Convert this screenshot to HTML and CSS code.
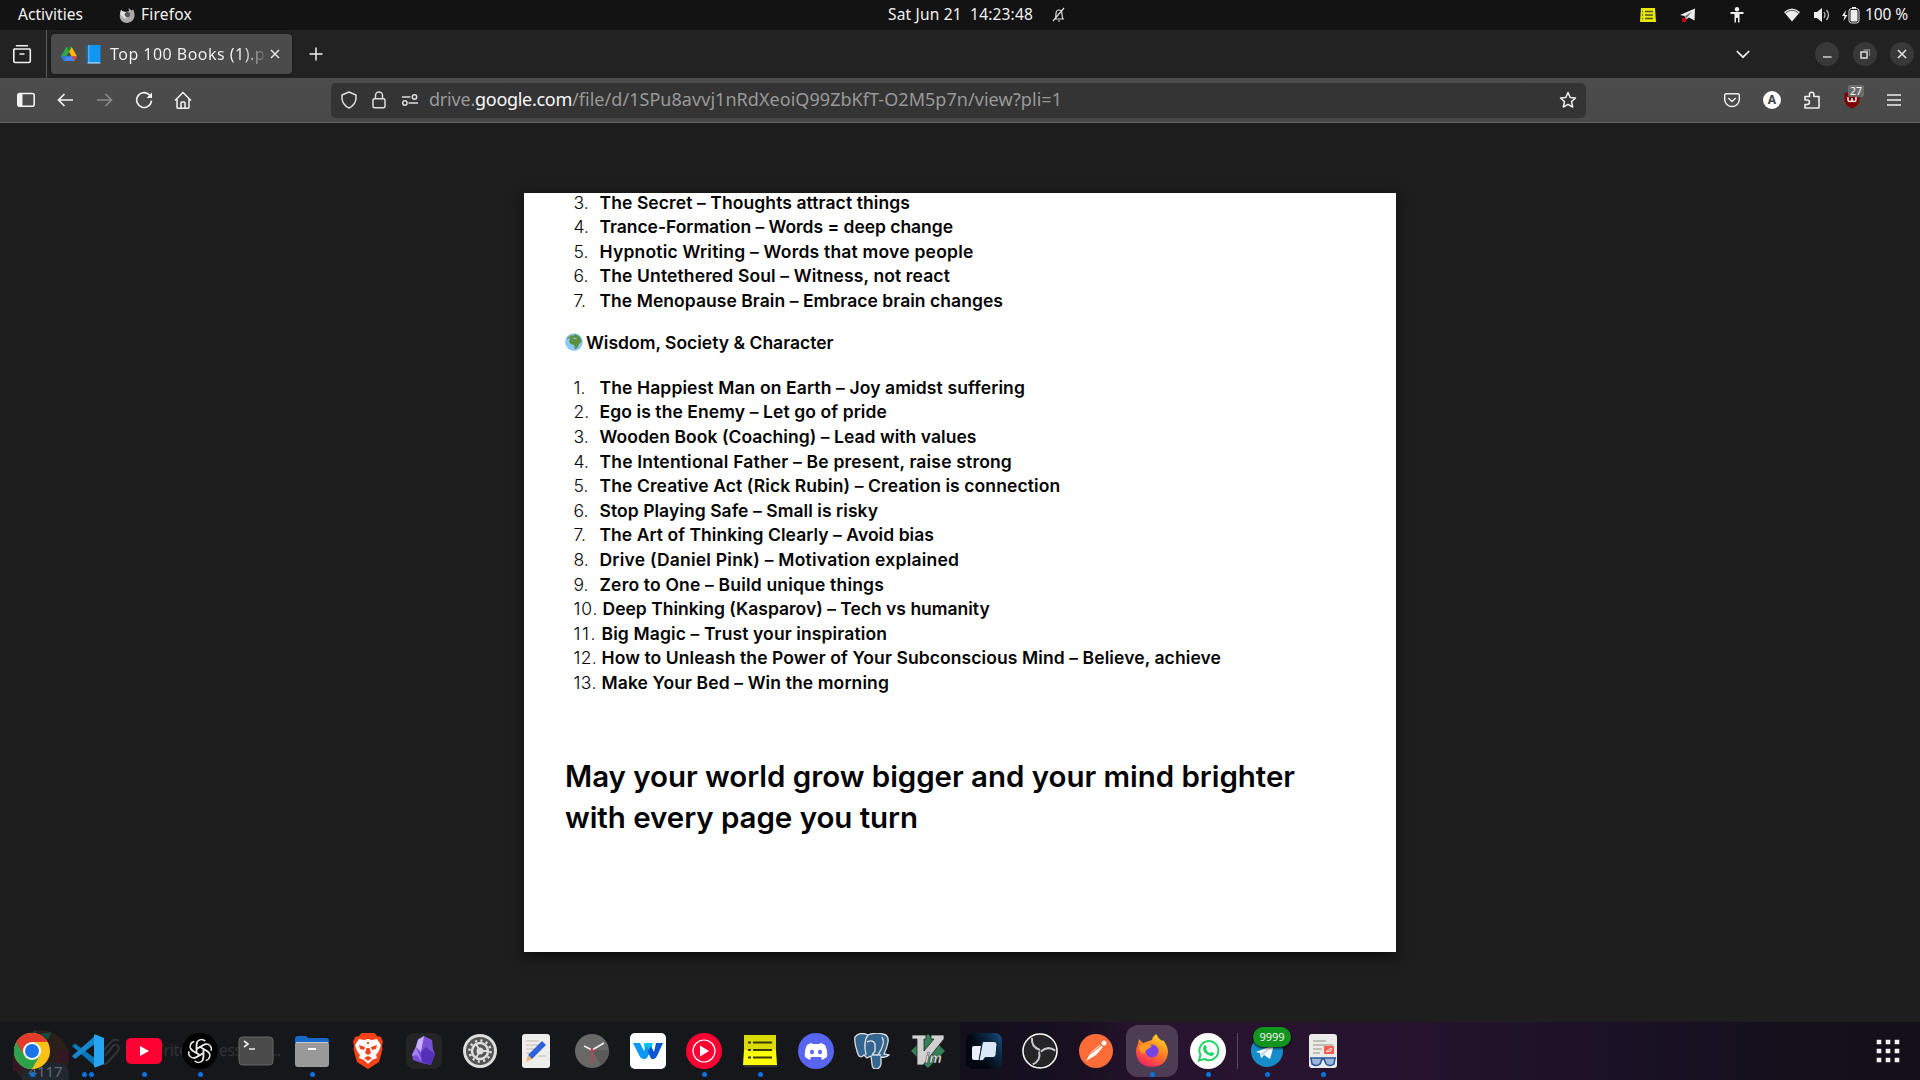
FILE: index.html
```html
<!DOCTYPE html>
<html lang="en">
<head>
<meta charset="utf-8">
<title>Top 100 Books (1).pdf</title>
<link rel="stylesheet" href="styles.css">
</head>
<body>
<header class="topbar">
  <div class="top-left">
    <span class="activities" data-fit="65">Activities</span>
    <svg class="ff-mini" width="16" height="16" viewBox="0 0 16 16"><path d="M1 7 2 3l2 1.500 3 .5 3-1-.5-3 3 2.500 1.500-1c3 5 2 13-6 13.500C2 15.500 0 11 1 7z" fill="#aaa"/><path d="M1 7 2 3l2 1.500 3 .5-2 3 4 1-3 3z" fill="#dedede"/><circle cx="8.500" cy="7.500" r="2.600" fill="#555"/></svg>
    <span data-fit="51">Firefox</span>
  </div>
  <div class="top-center">
    <span data-fit="145">Sat Jun 21&nbsp; 14:23:48</span>
    <svg width="16" height="16" viewBox="0 0 16 16" fill="none" stroke="#ddd" stroke-width="1.200"><path d="M3 12h10M4 12c1-2 1-3 1-5 0-3 1-4 3-4s3 1 3 4c0 2 0 3 1 5M2 14 13 1M7 14h2"/></svg>
  </div>
  <div class="top-right">
    <svg class="note-mini" width="16" height="15" viewBox="0 0 16 15"><path d="M1 0h14l1 14H0z" fill="#e9e900"/><path d="M2 3.500h1m2 0h8M2 7h1m2 0h8M2 10.500h1m2 0h8" stroke="#555518" stroke-width="1.300"/></svg>
    <svg class="tg-mini" width="17" height="16" viewBox="0 0 17 16"><path d="M0 8 15 1.500l-.5 12L9 10.500l-3 2L4.500 9z" fill="#eee"/><path d="m5 9 7-4.500L7.500 10 6 12z" fill="#777"/><circle cx="4" cy="13" r="2.200" fill="#d00000"/></svg>
    <svg class="access" width="14" height="16" viewBox="0 0 14 16"><circle cx="7" cy="2.300" r="2.200" fill="#eee"/><path d="M.5 5h13v2H9.500v8.500h-1.500V11H6v4.500H4.500V7H.5z" fill="#eee"/></svg>
    <svg class="wifi" width="16" height="14" viewBox="0 0 16 14"><path d="M0 4Q8-3 16 4L8 13.500z" fill="#eee"/><path d="M1.500 5Q8-.5 14.500 5" fill="none" stroke="#555"/></svg>
    <svg class="vol" width="16" height="14" viewBox="0 0 16 14"><path d="M0 4h3l5-4v14l-5-4H0z" fill="#eee"/><path d="M10 4q2 3 0 6M12.500 2q4 5 0 10" fill="none" stroke="#bbb" stroke-width="1.300"/></svg>
    <svg class="bat" width="18" height="17" viewBox="0 0 18 17"><path d="M4 3 0 9h2.500L1.500 14 5.500 8H3z" fill="#eee"/><rect x="8.500" y="3" width="7" height="11.500" rx="1" fill="#eee"/><rect x="7" y="1.500" width="10" height="14.500" rx="2.500" fill="none" stroke="#ddd"/><path d="M10 .5h4" stroke="#eee"/></svg>
    <span class="pct" data-fit="43">100 %</span>
  </div>
</header>

<nav class="tabstrip">
  <div class="recent"><svg width="20" height="20" viewBox="0 0 20 20" fill="none" stroke="#f0f0f0" stroke-width="1.600"><path d="M4.500 1.800h11M2.500 5h15" stroke-linecap="round"/><path d="M2.500 5Q1.800 5 1.800 6v11q0 1.500 1.500 1.500h13.500q1.500 0 1.500-1.500V6q0-1-.8-1M7.500 10h5"/></svg></div>
  <div class="tab">
    <svg width="16" height="16" viewBox="0 0 16 16"><path d="M5.300 1h5.400L8 5.800 2.700 15 0 10.300z" fill="#2fa84f"/><path d="M5.300 1h5.400L16 10.300h-5.400z" fill="#ffba00"/><path d="M5.300 1h5.400L8 5.700z" fill="#188038"/><path d="M5.400 10.300H16L13.300 15H2.700z" fill="#4285f4"/><path d="m0 10.300h5.400L2.700 15z" fill="#2874e8"/><path d="M10.700 10.300H16L13.300 15z" fill="#e94335"/></svg>
    <svg class="book" width="15" height="19" viewBox="0 0 15 19"><path d="M0 1 2 0v18L0 17z" fill="#226699"/><path d="M2 17h12v1.500H2z" fill="#ccd6dd"/><path d="M2 0h12.500v17H2z" fill="#0d96f2"/><path d="M2 0h1.500v17H2zM1 17.500h13.500v1H1z" fill="#55acee"/></svg>
    <span class="tab-title" data-fit="155">Top 100 Books (1).p</span>
    <svg class="tab-x" width="10" height="10" viewBox="0 0 10 10"><path d="m1 1 8 8M9 1 1 9" stroke="#eee" stroke-width="1.400"/></svg>
  </div>
  <svg class="newtab" width="14" height="14" viewBox="0 0 14 14"><path d="M7 .5v13M.5 7h13" stroke="#f0f0f0" stroke-width="1.500"/></svg>
  <svg class="chev" width="14" height="9" viewBox="0 0 14 9"><path d="m.8 1 6.200 6.200L13.200 1" fill="none" stroke="#eee" stroke-width="1.700"/></svg>
  <div class="winbtns">
    <span class="wb"><svg width="10" height="10"><path d="M1 8h8.500" stroke="#aaa" stroke-width="2"/></svg></span>
    <span class="wb"><svg width="10" height="10"><path d="M3.500 1h6v6" fill="none" stroke="#888" stroke-width="1.300"/><rect x="1" y="3" width="6" height="6" fill="none" stroke="#ddd" stroke-width="1.500"/></svg></span>
    <span class="wb"><svg width="10" height="10"><path d="m1 1 8 8M9 1 1 9" stroke="#ddd" stroke-width="1.700"/></svg></span>
  </div>
</nav>

<div class="toolbar">
  <div class="nav-icons">
    <svg width="18" height="18" viewBox="0 0 18 18"><rect x=".8" y="2.500" width="16.400" height="12.800" rx="2" fill="none" stroke="#f3f3f3" stroke-width="1.600"/><path d="M1 3h4.500v12H1z" fill="#f3f3f3"/></svg>
    <svg width="18" height="18" viewBox="0 0 18 18" fill="none" stroke="#f3f3f3" stroke-width="1.700"><path d="M17 9H2.500m6-6-6 6 6 6"/></svg>
    <svg width="18" height="18" viewBox="0 0 18 18" fill="none" stroke="#8b8b8b" stroke-width="1.600"><path d="M1 9h14.500m-6-6 6 6-6 6"/></svg>
    <svg width="18" height="18" viewBox="0 0 18 18" fill="none" stroke="#f3f3f3" stroke-width="1.600"><path d="M16.500 9.500A7.400 7.400 0 1 1 14 3.500l1.500 1.500"/><path d="M17 1.500V7h-5.500z" fill="#f3f3f3" stroke="none"/></svg>
    <svg width="18" height="18" viewBox="0 0 18 18" fill="none" stroke="#f3f3f3" stroke-width="1.500"><path d="m1 9.500 8-8 8 8M3 8v8.500q0 .7.700.7h10.600q.7 0 .7-.7V8M7 17v-5q0-1 1-1h2q1 0 1 1v5"/></svg>
  </div>
  <div class="urlbar">
    <svg class="shield" width="16" height="18" viewBox="0 0 16 18" fill="none" stroke="#ddd" stroke-width="1.500"><path d="M8 1 15 4v3c0 5-3 8-7 10C4 15 1 12 1 7V4z" stroke-linejoin="round"/></svg>
    <svg class="lock" width="14" height="18" viewBox="0 0 14 18" fill="none" stroke="#ddd" stroke-width="1.500"><rect x="1" y="7.800" width="12" height="9" rx="1.500"/><path d="M3.500 8V4.500a3.500 3.500 0 0 1 7 0V8"/></svg>
    <svg class="perm" width="16" height="12" viewBox="0 0 16 12" fill="none" stroke="#ddd" stroke-width="1.500"><path d="M0 3h8.500M6.500 9H16"/><circle cx="12.500" cy="3" r="2.200"/><circle cx="2.900" cy="9" r="2.200"/></svg>
    <div class="url"><span data-fit="46">drive.</span><span class="host" data-fit="97">google.com</span><span data-fit="490">/file/d/1SPu8avvj1nRdXeoiQ99ZbKfT-O2M5p7n/view?pli=1</span></div>
    <svg class="star" width="18" height="18" viewBox="0 0 18 18" fill="none" stroke="#eee" stroke-width="1.500"><path d="m9 1.500 2.200 5 5.300.5-4 3.600 1.200 5.400L9 13.300 4.300 16l1.200-5.400-4-3.600 5.300-.5z" stroke-linejoin="round"/></svg>
  </div>
  <div class="ext-icons">
    <svg width="18" height="18" viewBox="0 0 18 18" fill="none" stroke="#eee" stroke-width="1.500"><path d="M3.500 2.800h11q1.800 0 1.800 1.800V8.500a7.300 7 0 0 1-14.600 0V4.600q0-1.800 1.800-1.800zM5.300 7 9 10.500 12.700 7"/></svg>
    <span class="acct">A</span>
    <svg width="18" height="18" viewBox="0 0 18 18" fill="none" stroke="#eee" stroke-width="1.600"><path d="M2 8V5.500h4.500V3.500a2.200 2.200 0 0 1 4.400 0V5.500H16V17H2v-3.500h2.200a2.200 2.200 0 0 0 0-4.500H2z" stroke-linejoin="round"/></svg>
    <span class="ublock"><svg width="18" height="18" viewBox="0 0 18 18"><path d="M1.500 2Q6 2 9 0q3 2 7.500 2v7q0 5-7.500 8.500Q1.500 14 1.500 9z" fill="#7e0000"/><path d="M5 6v2.500q0 2 2 2t2-2V7v1.500q0 2 2 2t2-2V6" fill="none" stroke="#eee" stroke-width="1.500"/></svg><b>27</b></span>
    <svg class="menu" width="18" height="18" viewBox="0 0 18 18"><path d="M2 4h14M2 9h14M2 14h14" stroke="#eee" stroke-width="1.500"/></svg>
  </div>
</div>

<main class="viewer">
  <article class="paper">
    <ol class="books">
      <li><i>3.</i><b data-fit="310.500">The Secret – Thoughts attract things</b></li>
      <li><i>4.</i><b data-fit="353.500">Trance-Formation – Words = deep change</b></li>
      <li><i>5.</i><b data-fit="374">Hypnotic Writing – Words that move people</b></li>
      <li><i>6.</i><b data-fit="350.500">The Untethered Soul – Witness, not react</b></li>
      <li><i>7.</i><b data-fit="403.500">The Menopause Brain – Embrace brain changes</b></li>
    </ol>
    <h2 class="section"><svg width="18" height="18" viewBox="0 0 18 18"><circle cx="9" cy="9" r="8.800" fill="#88c9f9"/><path d="m4 4 2-2 2 1 2-2 4 2 2 3 .5 3-2.500 2-1 3-3 2.500-1-4.500-3-1-2-2 1-3zM1.500 6 4 3l-.5 3z" fill="#5c913b"/><path d="m7 4.500 4 .5 1 1.500-3-.8z" fill="#88c9f9"/></svg><span data-fit="247.500">Wisdom, Society &amp; Character</span></h2>
    <ol class="books">
      <li><i>1.</i><b data-fit="425.500">The Happiest Man on Earth – Joy amidst suffering</b></li>
      <li><i>2.</i><b data-fit="287.500">Ego is the Enemy – Let go of pride</b></li>
      <li><i>3.</i><b data-fit="377">Wooden Book (Coaching) – Lead with values</b></li>
      <li><i>4.</i><b data-fit="412.500">The Intentional Father – Be present, raise strong</b></li>
      <li><i>5.</i><b data-fit="460.500">The Creative Act (Rick Rubin) – Creation is connection</b></li>
      <li><i>6.</i><b data-fit="278.500">Stop Playing Safe – Small is risky</b></li>
      <li><i>7.</i><b data-fit="334.500">The Art of Thinking Clearly – Avoid bias</b></li>
      <li><i>8.</i><b data-fit="359.500">Drive (Daniel Pink) – Motivation explained</b></li>
      <li><i>9.</i><b data-fit="284.500">Zero to One – Build unique things</b></li>
      <li class="ten"><i data-fit="25">10.</i><b data-fit="387">Deep Thinking (Kasparov) – Tech vs humanity</b></li>
      <li class="two"><i data-fit="23.500">11.</i><b data-fit="285.500">Big Magic – Trust your inspiration</b></li>
      <li class="two"><i data-fit="23.500">12.</i><b data-fit="619.500">How to Unleash the Power of Your Subconscious Mind – Believe, achieve</b></li>
      <li class="two"><i data-fit="23.500">13.</i><b data-fit="287.500">Make Your Bed – Win the morning</b></li>
    </ol>
    <p class="closing"><span data-fit="730">May your world grow bigger and your mind brighter</span><br><span data-fit="353">with every page you turn</span></p>
  </article>
</main>

<footer class="dock">
  <div class="ghost">
    <svg class="ghost-avatar" width="56" height="50" viewBox="0 0 56 50"><circle cx="28" cy="28" r="28" fill="#2a2019"/><path d="m12 6 12-6-4 6zM26 4l12-2-3 8z" fill="#17493e"/><path d="M45 20h11v12H45zM0 31h12v10H0z" fill="#351624"/></svg>
    <span class="ghost-count">4117</span>
    <svg class="ghost-clip" width="24" height="28" viewBox="0 0 24 28" fill="none" stroke="#303236" stroke-width="2.200"><path d="m7 18 8-10q3-3 5 0t-1 6L9 25q-5 3-7-2t2-9L13 4q4-4 8-1"/></svg>
    <span class="ghost-text" data-fit="132">Write a message...</span>
  </div>
  <div class="app d1"><svg viewBox="0 0 36 36"><circle cx="18" cy="18" r="18" fill="#fbc116"/><path d="M18 18 2.400 9A18 18 0 0 0 18 36l7.800-13.500z" fill="#2da04c"/><path d="M2.400 9A18 18 0 0 1 33.600 9H18l-7.800 13.500z" fill="#e33b2e"/><circle cx="18" cy="18" r="9" fill="#fff"/><circle cx="18" cy="18" r="7" fill="#1a73e8"/></svg></div>
  <div class="app d2"><svg viewBox="0 0 36 36"><path d="M2 13 5 10.500 26 26v8z" fill="#0877b9"/><path d="M2 23 5 26 26 10V2z" fill="#1687ce"/><path d="m24 2 1.500-.5L34 5v26l-8.500 3.500L24 34z" fill="#27a5f1"/></svg></div>
  <div class="app d1"><svg viewBox="0 0 36 36"><rect y="5" width="36" height="26" rx="5" fill="#ff0033"/><path d="m14 13 9 5-9 5z" fill="#fff"/></svg></div>
  <div class="app d1"><svg viewBox="0 0 36 36"><circle cx="18" cy="18" r="18"/><g fill="none" stroke="#e8e8e8" stroke-width="1.500"><g id="knot"><path d="M14.500 20V11.500a5 5 0 0 1 8.800-3.200M14.500 16l7-4a5 5 0 0 1 3-.6"/></g><use href="#knot" transform="rotate(60 18 18)"/><use href="#knot" transform="rotate(120 18 18)"/><use href="#knot" transform="rotate(180 18 18)"/><use href="#knot" transform="rotate(240 18 18)"/><use href="#knot" transform="rotate(300 18 18)"/></g></svg></div>
  <div class="app"><svg viewBox="0 0 36 36"><rect x="1" y="4" width="34" height="28" rx="3.500" fill="#4b4b4b" stroke="#666"/><path d="m6 8 4 3-4 3M11 16h6" fill="none" stroke="#eee" stroke-width="1.600"/></svg></div>
  <div class="app d1"><svg viewBox="0 0 36 36"><path d="M1 14V6q0-3 3-3h8l2 2h18q3 0 3 3v6z" fill="#1668ca"/><rect x="1" y="9" width="34" height="25" rx="3" fill="#999"/><path d="M2 9.500h32" stroke="#ccc"/><path d="M14 16h8" stroke="#fff" stroke-width="2"/></svg></div>
  <div class="app"><svg viewBox="0 0 36 36"><path d="M11.500 0h13l3 3.500h3l2.500 5-1 4 .5 4L29 29l-11 7-11-7-3.500-12.500.5-4-1-4 2.500-5h3z" fill="#fa4218"/><path d="m9 6 5 1 4-1 4 1 5-1 4 6-2 6-3 4 1 3-5 2-4 4-4-4-5-2 1-3-3-4-2-6z" fill="#fff"/><path d="m9 12 6 2-1 3-4-1zm18 0-6 2 1 3 4-1zM16.500 9h3L18 12zM16.500 15h3l1.500 5-3 2-3-2zM14 25l4-2 4 2-4 3z" fill="#fa4218"/></svg></div>
  <div class="app"><svg viewBox="0 0 36 36"><rect width="36" height="36" rx="8" fill="#242424"/><path d="m18 3 8 4 1 9 2 5-4 11-9-2-9-3-1-6 4-8 2-7z" fill="#7850d6"/><path d="m18 3-6 4-2 7 5 5z" fill="#c9b2ff"/><path d="m10 14-4 9 5-1 5 7z" fill="#a583f1"/><path d="m15 19 5-5 9 7-4 11-9-3z" fill="#5430b7"/></svg></div>
  <div class="app"><svg viewBox="0 0 36 36"><circle cx="18" cy="18" r="17" fill="#dededc"/><circle cx="18" cy="18" r="14" fill="#555"/><circle cx="18" cy="18" r="10.500" fill="none" stroke="#ddd" stroke-width="2.500" stroke-dasharray="2.200 3.300"/><circle cx="18" cy="18" r="8" fill="none" stroke="#ddd" stroke-width="2.500"/><circle cx="18" cy="18" r="3.500" fill="#ddd"/><path d="m18 18 8 0M18 18l-4-7M18 18l-4 7" stroke="#ddd" stroke-width="1.800"/></svg></div>
  <div class="app"><svg viewBox="0 0 36 36"><rect x="4" y="1" width="28" height="34" rx="3" fill="#ededeb"/><path d="M8 8h13M8 12h13M8 16h9M8 20h7M20 23h8" stroke="#bdb9ac"/><path d="m10 22 14-14 4 4-14 14z" fill="#2e62d8"/><path d="m10 22 4 4-6 3z" fill="#f4b46b"/></svg></div>
  <div class="app"><svg viewBox="0 0 36 36"><circle cx="18" cy="18" r="17" fill="#686868"/><path d="M18 17 35 17a17 17 0 0 1-8 15z" fill="#5a5a5a"/><path d="m10 13 8 4 12-7" fill="none" stroke="#eee" stroke-width="1.600"/><path d="M18 15v15" stroke="#e3324b" stroke-width="1.200"/><circle cx="18" cy="17" r="1.500" fill="#e3324b"/></svg></div>
  <div class="app"><svg viewBox="0 0 36 36"><rect width="36" height="36" rx="5" fill="#fff"/><path d="M14 10h9l-3 9-5 1z" fill="#00c2ff"/><path d="M3 10h7l4 8 3-5 3 6-3 6q-3 2-6 0-1-1-2-3z" fill="#0a98f5"/><path d="m33 10-6 13q-2 4-5 3-2-1-4-8l3-5 3 6 2-9z" fill="#0755cf"/></svg></div>
  <div class="app d1"><svg viewBox="0 0 36 36"><circle cx="18" cy="18" r="18" fill="#ff0033"/><circle cx="18" cy="18" r="11" fill="none" stroke="#fff" stroke-width="1.200"/><path d="m14 12.500 9 5.500-9 5.500z" fill="#fff"/></svg></div>
  <div class="app d1"><svg viewBox="0 0 36 36"><path d="M2 2h32v15H2z" fill="#dbdb00"/><path d="M2 17h32l1 15H1z" fill="#ff0"/><path d="M1 32h34v2H2z" fill="#333"/><path d="M6 9.500h3m2 0h19M6 17h3m2 0h19M6 24.500h3m2 0h19" stroke="#38380b" stroke-width="2"/></svg></div>
  <div class="app"><svg viewBox="0 0 36 36"><circle cx="18" cy="18" r="18" fill="#5865f2"/><path d="m13 10 2 1h6l2-1 4 2q3 6 2 12l-5 3-1-3H13l-1 3-5-3q-1-6 2-12z" fill="#fff"/><ellipse cx="14" cy="19" rx="2" ry="2.300" fill="#5865f2"/><ellipse cx="22" cy="19" rx="2" ry="2.300" fill="#5865f2"/></svg></div>
  <div class="app"><svg viewBox="0 0 36 36"><path d="M3 2q5-3 11 0 7-3 15-1 6 1 5 8-1 6-4 12l5 1q-3 3-8 2v7q-1 5-5 5t-4-5l-1-8-4 2-3-3q-5 5-7-4-3-9-2-14z" fill="#336791" stroke="#ddd" stroke-width="1.300"/><path d="M12 22q-3-14 2-20M13 9q6-3 8 2v7l-3 4M24 22q8-12 4-18M18 22h9" fill="none" stroke="#ddd" stroke-width="1.400"/></svg></div>
  <div class="app"><svg viewBox="0 0 36 36"><path d="M18 1 35 18 18 35 1 18z" fill="#358057"/><path d="M2 2h14v4h-2v12L24 6h-3V2h13v4L13 32H7V6H2z" fill="#d0d0d0" stroke="#222" stroke-width=".8"/><text x="15" y="30" class="vim">im</text></svg></div>
  <div class="app"><svg viewBox="0 0 36 36"><defs><linearGradient id="bg" x2="1" y2="-.6"><stop stop-color="#03070f"/><stop offset=".4" stop-color="#0c2744"/><stop offset="1" stop-color="#1775b5"/></linearGradient></defs><rect width="36" height="36" rx="7" fill="url(#bg)"/><path d="M8 13h7l-2 14H8q-2 0-2-2V15q0-2 2-2z" fill="#eaf0fb"/><path d="M18 8.500h10q3 0 3 3l-1 10q0 3-3 3h-8l-2 3h-4l3-16q0-3 2-3z" fill="#dce7fa" stroke="#102337"/></svg></div>
  <div class="app"><svg viewBox="0 0 36 36"><circle cx="18" cy="18" r="17" fill="#252427" stroke="#fff" stroke-width="1.500"/><g fill="none" stroke="#c8c8cb" stroke-width="2"><path id="blade" d="M18 17Q9 14 10 5"/><use href="#blade" transform="rotate(120 18 18)"/><use href="#blade" transform="rotate(240 18 18)"/></g></svg></div>
  <div class="app"><svg viewBox="0 0 36 36"><circle cx="18" cy="18" r="17" fill="#ff6c37"/><path d="m8 28 5-9 9-7 3 2-7 8z" fill="#fff"/><circle cx="26" cy="10" r="2.500" fill="#fff"/><path d="M12 21 23 13" stroke="#ff6c37"/></svg></div>
  <div class="app d1 active"><svg viewBox="0 0 36 36"><defs><linearGradient id="fx" x1=".8" y1="0" x2=".3" y2="1"><stop stop-color="#ffe226"/><stop offset=".5" stop-color="#ff7b22"/><stop offset="1" stop-color="#f42166"/></linearGradient></defs><path d="M22 1q2 4 6 7l1-1q5 6 5 12-1 14-16 15Q3 33 2 19q0-5 2-8l1-5 4 4 3-1 6-2q1-4 4-6z" fill="url(#fx)"/><circle cx="18" cy="18" r="6.500" fill="#7542e5"/><path d="M5 13q7-4 13 0l-3 2.500q-4 1-4 5Q4 20 5 13z" fill="#ff9b25"/></svg></div>
  <div class="app d1"><svg viewBox="0 0 36 36"><circle cx="18" cy="18" r="18" fill="#fff"/><path d="M9 27.500 10.500 22a9.500 9.500 0 1 1 4 4z" fill="none" stroke="#25d366" stroke-width="2"/><path d="M14 12.500q1-1 2 0l1 2.500-1 1q1 3 4 4l1-1 3 1q0 3-3 3-8-2-8-8z" fill="#25d366"/></svg></div>
  <span class="sep"></span>
  <div class="app d1"><svg viewBox="0 0 36 36"><circle cx="18" cy="18" r="16" fill="#168dc8"/><path d="m7 19 18-7-4 14-6-4-3 3-1-5z" fill="#fff"/><path d="m12 20 10-6-7 8-2 3z" fill="#c8dce9"/></svg><span class="badge">9999</span></div>
  <div class="app d1"><svg viewBox="0 0 36 36"><rect x="4" y="1" width="28" height="34" rx="3" fill="#ebebe9"/><path d="M8 8h13M8 12h20M8 16h9M8 20h7" stroke="#b4afa0" stroke-width="1.300"/><path d="M19 13h10v8H19z" fill="#ff5b50"/><path d="m21 19 5-4q2 4-4 3" fill="none" stroke="#fff"/><path d="M5 25h26M6 25l1 6q5 3 8 0l2-5h2l2 5q4 3 8 0l1-6" fill="#9db6d8" stroke="#24579a" stroke-width="1.500"/></svg></div>
  <svg class="grid" width="24" height="24" viewBox="0 0 24 24" fill="#f2f2f0"><path d="M.7.7h4.600v4.600H.7zM9.700.7h4.600v4.600H9.700zM18.700.7h4.600v4.600h-4.600zM.7 9.700h4.600v4.600H.7zM9.700 9.700h4.600v4.600H9.700zM18.700 9.700h4.600v4.600h-4.600zM.7 18.700h4.600v4.600H.7zM9.700 18.700h4.600v4.600H9.700zM18.700 18.700h4.600v4.600h-4.600z"/></svg>
</footer>
<script src="fit.js"></script>
</body>
</html>
```
FILE: styles.css
```css
* { box-sizing: border-box; }
body { margin: 0; width: 1920px; height: 1080px; overflow: hidden; display: flex; flex-direction: column; background: #1e1e1e; color: #f2f2f2; font: 16px/20px "Noto Sans", "Open Sans", sans-serif; }
svg { display: block; flex: none; }
[data-fit] { white-space: nowrap; }

.topbar { height: 30px; background: #131313; display: grid; grid-template-columns: 888px 1fr 280px; align-items: center; font-size: 15.500px; }
.top-left, .top-center, .top-right { display: flex; align-items: center; height: 30px; }
.topbar span { margin-top: -2px; }
.top-left { padding-left: 18px; }
.activities { margin-right: 36px; }
.ff-mini { margin-right: 6px; }
.top-center svg { margin-left: 18px; }
.tg-mini { margin-left: 24px; }
.access { margin-left: 33px; }
.wifi { margin-left: 40px; }
.vol { margin-left: 14px; }
.bat { margin-left: 12px; }
.pct { margin-left: 5px; }

.tabstrip { height: 48px; background: #222; display: flex; align-items: center; }
.recent { width: 47px; height: 48px; padding: 14px 0 0 12px; border-right: 1px solid #5a5a5a; }
.tab { width: 241px; height: 40px; margin-left: 4px; padding: 0 13px 0 10px; border-radius: 4px; background: #4b4b4b; box-shadow: 0 0 3px #111; display: flex; align-items: center; }
.book { margin-left: 9px; }
.tab-title { width: 155px; margin-left: 9px; background: linear-gradient(90deg, #f5f5f5 86%, #5d5d5d); background-clip: text; color: transparent; }
.tab-x { margin-left: 5px; }
.newtab { margin-left: 17px; }
.chev { margin-left: auto; }
.winbtns { display: flex; gap: 13.500px; margin: -1px 6px 0 65px; }
.wb { width: 24px; height: 24px; border-radius: 50%; background: #383838; display: flex; align-items: center; justify-content: center; }

.toolbar { height: 45px; background: linear-gradient(#4c4c4c, #494949); border-bottom: 1px solid #606060; display: flex; align-items: center; }
.nav-icons { width: 331px; padding-left: 17px; display: flex; gap: 21.300px; }
.urlbar { width: 1255px; height: 35px; border-radius: 5px; background: #343434; display: flex; align-items: center; padding: 0 9px 0 9.500px; }
.lock { margin-left: 15.500px; }
.perm { margin-left: 16px; }
.url { display: flex; margin: -2px 0 0 11px; font-size: 18px; line-height: 24px; color: #999; }
.host { color: #fafafa; }
.star { margin-left: auto; }
.ext-icons { display: flex; gap: 22px; margin-left: 137px; }
.acct { width: 18px; height: 18px; border-radius: 50%; background: #fafafa; color: #444; font: bold 12px/18px "Noto Sans", sans-serif; text-align: center; }
.menu { margin-left: 2px; }
.ublock { position: relative; }
.ublock b { position: absolute; left: 5px; top: -6px; width: 16px; height: 12px; border-radius: 2px; background: #6b6b6b; color: #fff; font: 10.500px/12px "Noto Sans", sans-serif; text-align: center; }

.viewer { height: 899px; padding-top: 70px; background: #1e1e1e; }
.paper { width: 872px; height: 759px; margin: 0 auto; padding-left: 41px; overflow: hidden; background: #fff; color: #050505; font: 600 17.500px/24.600px Inter, sans-serif; box-shadow: 0 4px 14px #0009; }
.books { list-style: none; margin: -2.500px 0 0; padding: 0 0 0 8.500px; }
.books li { display: flex; height: 24.600px; }
.books i { width: 26px; font-style: normal; font-weight: 300; }
.books b { font-weight: 600; }
.books .two i { width: 28px; }
.books .ten i { width: 29px; }
.section { display: flex; align-items: center; gap: 3px; margin: 17.300px 0 23px; font: inherit; height: 24.600px; }
.section svg { margin-top: -2px; }
.closing { margin: 60px 0 0; font-size: 29.500px; line-height: 41px; }

.dock { position: relative; height: 58px; padding-left: 4px; display: flex; align-items: center; background: linear-gradient(24deg, transparent 42%, #3b194022 43%) 1080px 0 / 240px 58px no-repeat, linear-gradient(90deg, #15171a 960px, #130f1c 960px, #180f20 1070px, #26132d 1150px, #26132d 1380px, #1b1126 1620px, #14101c 1780px, #14101b); }
.app { position: relative; width: 56px; height: 52px; display: flex; align-items: center; justify-content: center; flex: none; }
.app > svg { width: 36px; height: 36px; }
.active { width: 52px; margin: 0 2px; border-radius: 12px; background: #4d3d54; }
.d1::after, .d2::after { content: ""; position: absolute; left: 50%; bottom: 0; width: 5px; height: 5px; margin-left: -2.500px; border-radius: 50%; background: #0873df; }
.d2::after { margin-left: -6px; box-shadow: 7px 0 #0873df; }
.sep { width: 1px; height: 36px; margin: 0 1px; background: #594a5d; }
.badge { position: absolute; left: 14px; top: 2px; width: 38px; height: 20px; border-radius: 10px; background: #11951e; box-shadow: 0 1px 3px #000; font-size: 11px; line-height: 20px; text-align: center; }
.vim { font: italic bold 14px "Noto Sans", sans-serif; fill: #ddd; stroke: #222; stroke-width: .4px; }
.grid { margin-left: auto; margin-right: 20px; }
.ghost { position: absolute; inset: 0; color: #303236; font-size: 16px; line-height: 20px; }
.ghost > * { position: absolute; }
.ghost-avatar { left: 13px; top: 8px; }
.ghost-count { left: 22px; top: 41px; width: 47px; height: 17px; border-radius: 10px 10px 0 0; background: #202731; color: #65696e; font-size: 15px; line-height: 17px; text-align: center; }
.ghost-clip { left: 98px; top: 16px; }
.ghost-text { left: 149px; top: 18px; }
```
FILE: fit.js
```js
document.querySelectorAll('[data-fit]').forEach(function (el) {
  var range = document.createRange();
  range.selectNodeContents(el);
  var natural = range.getBoundingClientRect().width;
  var count = el.textContent.length;
  el.style.letterSpacing = ((parseFloat(el.dataset.fit) - natural) / count) + 'px';
});
```
